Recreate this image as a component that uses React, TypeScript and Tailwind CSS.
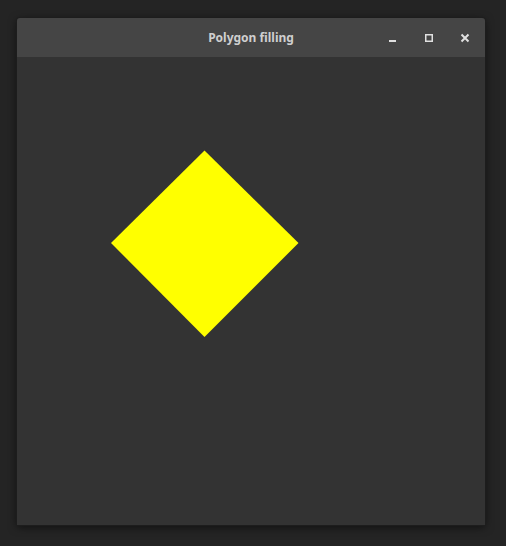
export default function App() {
  return (
    <div className="w-[506px] h-[546px] bg-[#242424] pt-[18px] pl-[17px]">
      <div className="w-[468px] flex flex-col rounded-t-[3px] overflow-hidden shadow-[0_0_0_1px_rgba(30,30,30,0.9),0_2px_8px_rgba(0,0,0,0.6)]">
        {/* title bar */}
        <div className="h-[39px] bg-[#454545] flex items-center relative">
          <span
            className="absolute left-0 right-0 text-center text-[12px] font-bold text-[#cfcfcf]"
            style={{ fontFamily: '"Noto Sans", sans-serif' }}
          >
            Polygon filling
          </span>
          <div className="ml-auto flex items-center gap-[22px] pr-[13px] relative">
            <svg width="14" height="14" viewBox="0 0 14 14">
              <rect x="3" y="9" width="7" height="2" fill="#e0e0e0" />
            </svg>
            <svg width="14" height="14" viewBox="0 0 14 14">
              <rect x="3.75" y="3.75" width="6.5" height="6.5" fill="none" stroke="#e0e0e0" strokeWidth="1.5" />
            </svg>
            <svg width="14" height="14" viewBox="0 0 14 14">
              <path d="M3.5 3.5 L10.5 10.5 M10.5 3.5 L3.5 10.5" stroke="#e0e0e0" strokeWidth="2" />
            </svg>
          </div>
        </div>
        {/* canvas */}
        <div className="h-[468px] bg-[#333333]">
          <svg width="468" height="468" viewBox="0 0 468 468">
            <polygon points="187.5,93.5 281.5,186 187.5,280 94,186" fill="#ffff00" />
          </svg>
        </div>
      </div>
    </div>
  );
}
